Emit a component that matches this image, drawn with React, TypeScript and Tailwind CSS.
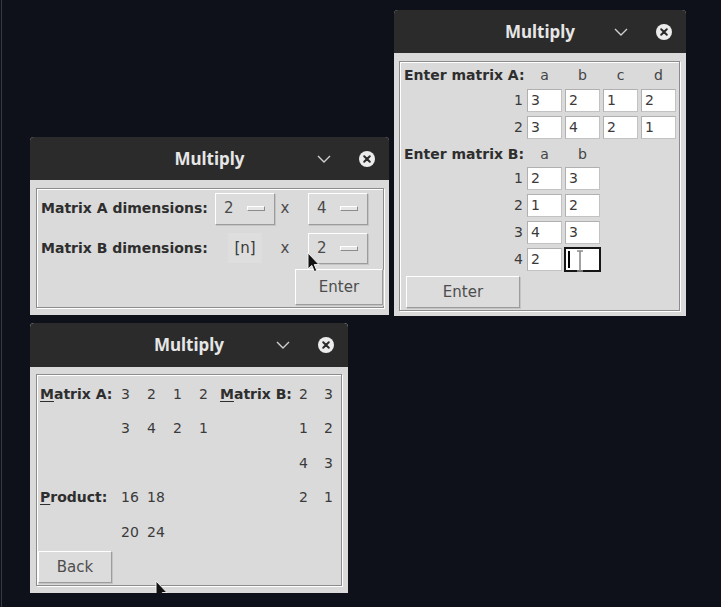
import React from 'react';

const ui = { fontFamily: '"DejaVu Sans", "Liberation Sans", sans-serif' };
const titleFont = { fontFamily: '"Noto Sans", "Open Sans", sans-serif' };

function TitleBar({ h }: { h: string }) {
  return (
    <div className={`${h} grid grid-cols-[1fr_auto_1fr] items-center bg-[#2b2b2b] rounded-t-[4px]`}>
      <div />
      <span className="text-[17px] font-bold text-[#e6e6e6]" style={titleFont}>
        Multiply
      </span>
      <div className="flex items-center justify-end gap-[28px] pr-[14px]">
        <svg width="14" height="8" viewBox="0 0 14 8">
          <path d="M1 1 L7 7 L13 1" fill="none" stroke="#cfcfcf" strokeWidth="1.4" />
        </svg>
        <svg width="16" height="16" viewBox="0 0 16 16">
          <circle cx="8" cy="8" r="8" fill="#ececec" />
          <path d="M5.2 5.2 L10.8 10.8 M10.8 5.2 L5.2 10.8" stroke="#2b2b2b" strokeWidth="2" strokeLinecap="round" />
        </svg>
      </div>
    </div>
  );
}

function Frame({ children, className = '' }: { children: React.ReactNode; className?: string }) {
  return (
    <div className={`h-full border border-[#8c8c8c] shadow-[inset_1px_1px_0_#ffffff,1px_1px_0_#ffffff] ${className}`}>
      {children}
    </div>
  );
}

function Button({ label, className }: { label: string; className: string }) {
  return (
    <div
      className={`${className} flex items-center justify-center bg-[#dcdcdc] border border-t-white border-l-white border-r-[#9c9c9c] border-b-[#9c9c9c] shadow-[1px_1px_0_#c4c4c4] text-[15px] text-[#4d4d4d]`}
    >
      {label}
    </div>
  );
}

function Entry({ value, focused }: { value?: string; focused?: boolean }) {
  if (focused) {
    return (
      <div className="relative w-[35px] h-[23px] bg-white border border-[#161616] shadow-[0_0_0_1px_#161616] flex items-center">
        <div className="ml-[2px] w-[2px] h-[17px] bg-black" />
        <svg className="absolute left-[10px] top-[1px]" width="8" height="22" viewBox="0 0 8 22">
          <path d="M1 1 H7 M4 1 V21 M1 21 H7" stroke="#8a8a8a" strokeWidth="1.6" fill="none" />
        </svg>
      </div>
    );
  }
  return (
    <div className="w-[35px] h-[23px] bg-white border border-[#c2c2c2] border-t-[#b0b0b0] border-l-[#b0b0b0] pl-[3px] flex items-center text-[14px] text-[#3a3a3a]">
      {value}
    </div>
  );
}

function Arrow({ className }: { className: string }) {
  return (
    <svg className={`absolute ${className}`} width="13" height="21" viewBox="0 0 13 21">
      <path d="M1 1 L1 17 L4.8 13.4 L7.4 19.6 L9.8 18.6 L7.3 12.6 L12 12.6 Z" fill="#111" stroke="#f2f2f2" strokeWidth="1" />
    </svg>
  );
}

function OptionBox({ value, h }: { value: string; h: string }) {
  return (
    <div
      className={`w-[60px] ${h} flex items-center justify-between pl-[8px] pr-[9px] bg-[#dcdcdc] border border-t-white border-l-white border-r-[#9c9c9c] border-b-[#9c9c9c] shadow-[1px_1px_0_#c4c4c4] text-[15px] text-[#4a4a4a]`}
    >
      <span>{value}</span>
      <div className="w-[18px] h-[5px] bg-[#e6e6e6] border border-t-white border-l-white border-r-[#8c8c8c] border-b-[#8c8c8c]" />
    </div>
  );
}

function EnterMatrixWindow() {
  const a = [
    ['3', '2', '1', '2'],
    ['3', '4', '2', '1'],
  ];
  const b = [
    ['2', '3'],
    ['1', '2'],
    ['4', '3'],
    ['2', ''],
  ];
  return (
    <div className="absolute left-[394px] top-[10px] w-[292px] h-[306px] flex flex-col bg-[#dadada] rounded-t-[4px]" style={ui}>
      <TitleBar h="h-[43px]" />
      <div className="flex-1 pt-[8px] pl-[5px] pr-[6px] pb-[5px]">
        <Frame>
          <div className="flex h-[26px] items-center gap-[3px]">
            <div className="w-[124px] pl-[4px] whitespace-nowrap text-[14px] font-bold text-[#2e2e2e]">Enter matrix A:</div>
            {['a', 'b', 'c', 'd'].map((h) => (
              <div key={h} className="w-[35px] text-center text-[14px] text-[#444]">{h}</div>
            ))}
          </div>
          {a.map((row, i) => (
            <div key={i} className="flex h-[27px] pt-[1px] gap-[3px]">
              <div className="w-[124px] h-[23px] flex items-center justify-end pr-[1px] text-[14px] text-[#3a3a3a]">{i + 1}</div>
              {row.map((v, j) => (
                <Entry key={j} value={v} />
              ))}
            </div>
          ))}
          <div className="flex h-[24px] items-center gap-[3px]">
            <div className="w-[124px] pl-[4px] whitespace-nowrap text-[14px] font-bold text-[#2e2e2e]">Enter matrix B:</div>
            {['a', 'b'].map((h) => (
              <div key={h} className="w-[35px] text-center text-[14px] text-[#444]">{h}</div>
            ))}
          </div>
          {b.map((row, i) => (
            <div key={i} className="flex h-[27px] pt-[1px] gap-[3px]">
              <div className="w-[124px] h-[23px] flex items-center justify-end pr-[1px] text-[14px] text-[#3a3a3a]">{i + 1}</div>
              <Entry value={row[0]} />
              <Entry value={row[1]} focused={i === 3} />
            </div>
          ))}
          <Button label="Enter" className="mt-[2px] ml-[6px] w-[114px] h-[32px]" />
        </Frame>
      </div>
    </div>
  );
}

function DimensionsWindow() {
  return (
    <div className="absolute left-[30px] top-[137px] w-[359px] h-[178px] flex flex-col bg-[#dadada] rounded-t-[4px]" style={ui}>
      <TitleBar h="h-[43px]" />
      <div className="flex-1 pt-[8px] pl-[6px] pr-[5px] pb-[7px]">
        <Frame>
          <div className="flex h-[39px] items-center">
            <div className="w-[178px] pl-[4px] whitespace-nowrap text-[14px] font-bold text-[#2e2e2e]">Matrix A dimensions:</div>
            <OptionBox value="2" h="h-[32px]" />
            <div className="w-[20px] text-center text-[15px] text-[#4a4a4a]">x</div>
            <div className="ml-[13px]">
              <OptionBox value="4" h="h-[32px]" />
            </div>
          </div>
          <div className="flex h-[40px] items-center">
            <div className="w-[178px] pl-[4px] whitespace-nowrap text-[14px] font-bold text-[#2e2e2e]">Matrix B dimensions:</div>
            <div className="w-[60px] flex justify-center">
              <span className="px-[6px] py-[4px] bg-[#dedede] text-[15px] text-[#3a3a3a]">[n]</span>
            </div>
            <div className="w-[20px] text-center text-[15px] text-[#4a4a4a]">x</div>
            <div className="ml-[13px]">
              <OptionBox value="2" h="h-[31px]" />
            </div>
          </div>
          <div className="flex justify-end mt-[1px]">
            <Button label="Enter" className="w-[88px] h-[36px]" />
          </div>
        </Frame>
      </div>
      <Arrow className="left-[277px] top-[115px]" />
    </div>
  );
}

function ResultWindow() {
  const label = 'text-[14px] font-bold text-[#2e2e2e] pl-[3px] whitespace-nowrap';
  const num = 'text-[14px] text-[#3a3a3a] pl-[2px]';
  const rows: string[][] = [
    ['A', '3', '2', '1', '2', 'B', '2', '3'],
    ['', '3', '4', '2', '1', '', '1', '2'],
    ['', '', '', '', '', '', '4', '3'],
    ['P', '16', '18', '', '', '', '2', '1'],
    ['', '20', '24', '', '', '', '', ''],
  ];
  return (
    <div className="absolute left-[30px] top-[323px] w-[318px] h-[270px] flex flex-col bg-[#dadada] rounded-t-[4px] overflow-hidden" style={ui}>
      <TitleBar h="h-[44px]" />
      <div className="flex-1 pt-[7px] px-[6px] pb-[7px]">
        <Frame className="pt-[2px]">
          <div className="grid grid-cols-[82px_26px_26px_26px_20px_80px_25px_19px] grid-rows-[34px_35px_34px_35px_34px] items-center">
            {rows.map((row, i) =>
              row.map((cell, j) => {
                if (j === 0 || j === 5) {
                  if (cell === 'A' || cell === 'B')
                    return (
                      <div key={`${i}-${j}`} className={label}>
                        <span className="underline underline-offset-2">M</span>atrix {cell}:
                      </div>
                    );
                  if (cell === 'P')
                    return (
                      <div key={`${i}-${j}`} className={label}>
                        <span className="underline underline-offset-2">P</span>roduct:
                      </div>
                    );
                  return <div key={`${i}-${j}`} />;
                }
                return (
                  <div key={`${i}-${j}`} className={num}>
                    {cell}
                  </div>
                );
              })
            )}
          </div>
          <Button label="Back" className="mt-[2px] ml-[1px] w-[74px] h-[32px]" />
        </Frame>
      </div>
      <Arrow className="left-[125px] top-[257px]" />
    </div>
  );
}

export default function App() {
  return (
    <div className="relative w-[721px] h-[607px] bg-[#0e1119] overflow-hidden">
      <div className="absolute left-[1px] top-0 bottom-0 w-px bg-[#353944]" />
      <EnterMatrixWindow />
      <DimensionsWindow />
      <ResultWindow />
    </div>
  );
}
